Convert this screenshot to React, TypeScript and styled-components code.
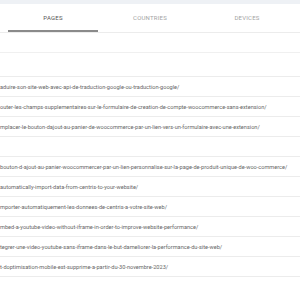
import styled, { createGlobalStyle } from "styled-components";

const GlobalStyle = createGlobalStyle`
  body {
    margin: 0;
    background: #fff;
    font-family: Roboto, "Liberation Sans", sans-serif;
  }
`;

const Page = styled.div`
  width: 300px;
  height: 300px;
  overflow: hidden;
  background: #fff;
`;

const TopBand = styled.div`
  height: 4px;
  background: #eef1f5;
`;

const TabBar = styled.div`
  display: flex;
  justify-content: space-between;
  padding: 0 8px;
  height: 28px;
  border-bottom: 1px solid #ececec;
`;

const Tab = styled.div<{ $active?: boolean }>`
  width: 90px;
  display: flex;
  align-items: center;
  justify-content: center;
  font-size: 6px;
  letter-spacing: 0.2px;
  text-transform: uppercase;
  color: ${(p) => (p.$active ? "#555" : "#a3a3a3")};
  box-sizing: border-box;
  padding-top: 1px;
  border-bottom: 2px solid ${(p) => (p.$active ? "#8a8a8a" : "transparent")};
`;

const Spacer = styled.div`
  height: 19px;
  border-bottom: 1px solid #f0f0f0;
`;

const Row = styled.div<{ $tall?: boolean }>`
  height: ${(p) => (p.$tall ? 23 : 19)}px;
  border-bottom: 1px solid #ececec;
  display: flex;
  align-items: ${(p) => (p.$tall ? "flex-end" : "center")};
  font-size: 5.6px;
  color: #666;
  white-space: nowrap;
  overflow: hidden;
`;

const slugs = [
  "",
  "aduire-son-site-web-avec-api-de-traduction-google-ou-traduction-google/",
  "outer-les-champs-supplementaires-sur-le-formulaire-de-creation-de-compte-woocommerce-sans-extension/",
  "mplacer-le-bouton-dajout-au-panier-de-woocommerce-par-un-lien-vers-un-formulaire-avec-une-extension/",
  "",
  "bouton-d-ajout-au-panier-woocommercer-par-un-lien-personnalise-sur-la-page-de-produit-unique-de-woo-commerce/",
  "automatically-import-data-from-centris-to-your-website/",
  "mporter-automatiquement-les-donnees-de-centris-a-votre-site-web/",
  "mbed-a-youtube-video-without-iframe-in-order-to-improve-website-performance/",
  "tegrer-une-video-youtube-sans-iframe-dans-le-but-dameliorer-la-performance-du-site-web/",
  "t-doptimisation-mobile-est-supprime-a-partir-du-30-novembre-2023/",
];

const App = () => {
  return (
    <Page>
      <GlobalStyle />
      <TopBand />
      <TabBar>
        <Tab $active>Pages</Tab>
        <Tab>Countries</Tab>
        <Tab>Devices</Tab>
      </TabBar>
      <Spacer />
      {slugs.map((slug, index) => (
        <Row key={index} $tall={index === 0}>
          {slug}
        </Row>
      ))}
    </Page>
  );
};

export default App;
